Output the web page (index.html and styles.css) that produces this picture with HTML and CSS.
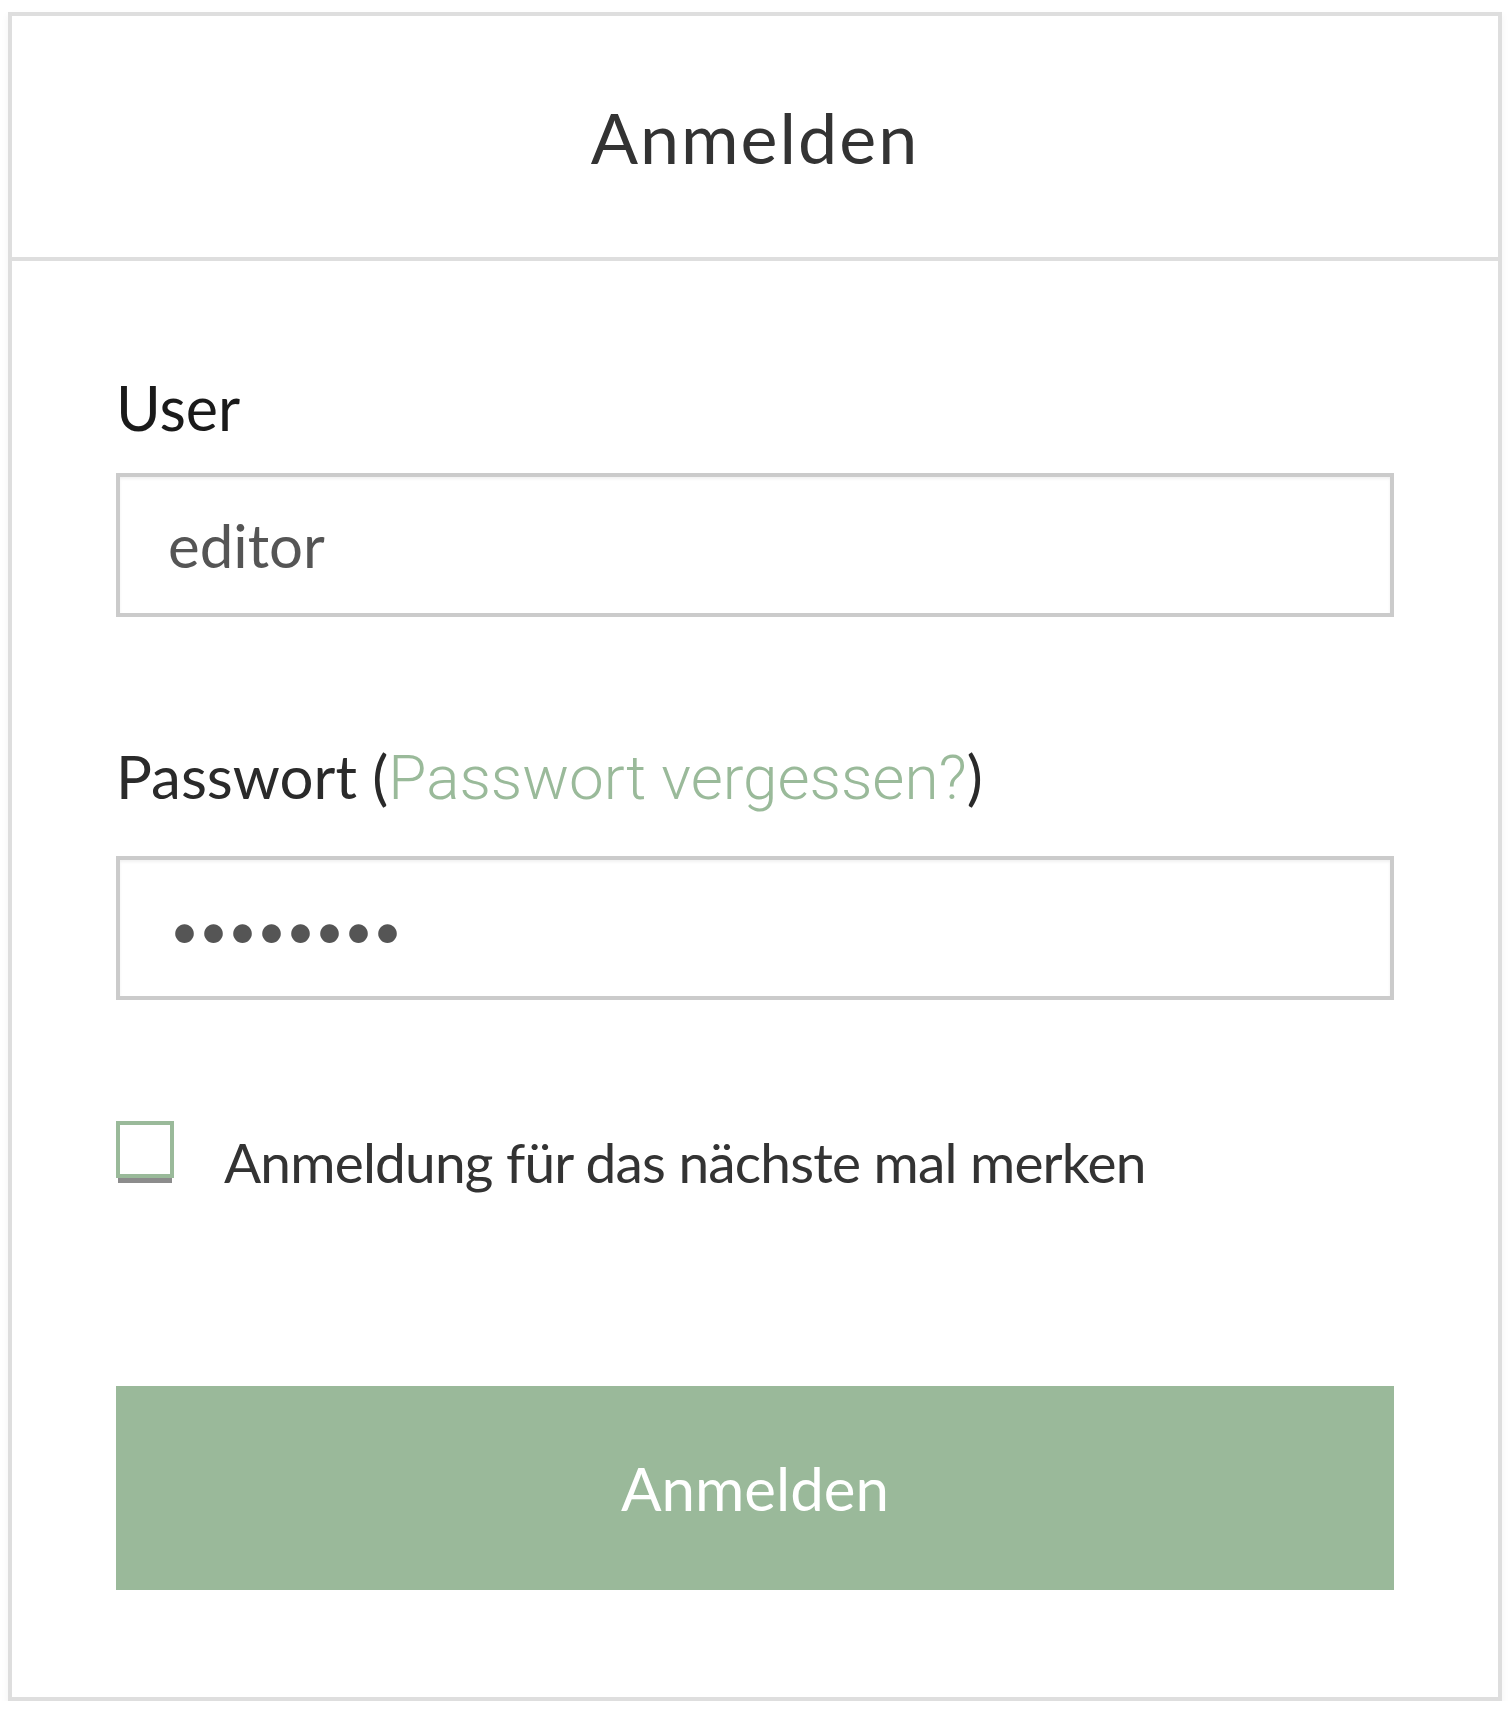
FILE: index.html
```html
<!DOCTYPE html>
<html lang="de">

<head>
    <meta charset="UTF-8">
    <meta name="viewport" content="width=device-width, initial-scale=1.0">
    <title>Anmelden</title>
    <link rel="stylesheet" href="styles.css">
</head>

<body>

    <div class="login">
        <header>Anmelden</header>
        <form class="login-form">
            <label class="field-label" for="user">User</label>
            <input class="field" id="user" type="text" value="editor">

            <label class="field-label pass-label" for="pass">Passwort (<a href="#">Passwort vergessen?</a>)</label>
            <input class="field pass-field" id="pass" type="password" value="12345678">

            <div class="remember">
                <input class="remember-box" id="remember" type="checkbox">
                <label for="remember">Anmeldung für das nächste mal merken</label>
            </div>

            <button class="submit" type="button">Anmelden</button>
        </form>
    </div>

</body>

</html>
```

FILE: styles.css
```css
body {
    font-family: Lato, "Open Sans", sans-serif;
    margin: 0;
    padding: 12px 0 0 8px;
    background-color: #fff;
}

.login {
    width: 1494px;
    box-sizing: border-box;
    border: 4px solid #dedede;
    background-color: #fff;
    box-shadow: 0 4px 8px rgba(0, 0, 0, 0.05);
}

header {
    height: 241px;
    display: flex;
    align-items: center;
    justify-content: center;
    border-bottom: 4px solid #dedede;
    font-size: 70px;
    line-height: 84px;
    letter-spacing: 2px;
    color: #333;
}

.login-form {
    display: flex;
    flex-direction: column;
    padding: 107px 104px 107px 104px;
}

.field-label {
    font-size: 61px;
    line-height: 80px;
    color: #1a1a1a;
}

.field-label a {
    font-family: Roboto, sans-serif;
    font-size: 62px;
    font-weight: 300;
    color: #9aba9a;
    text-decoration: none;
}

.pass-label {
    margin-top: 119px;
    font-size: 60px;
    color: #2a2a2a;
}

.field {
    height: 144px;
    box-sizing: border-box;
    margin-top: 25px;
    padding: 0 0 0 48px;
    border: 4px solid #cbcbcb;
    box-shadow: inset 0 2px 3px rgba(0, 0, 0, 0.06);
    font-family: Lato, sans-serif;
    font-size: 60px;
    color: #555;
    outline: none;
}

.pass-field {
    margin-top: 38px;
    padding-left: 50px;
    padding-top: 4px;
    letter-spacing: 0;
    font-size: 50px;
}

.remember {
    display: flex;
    align-items: flex-start;
    margin-top: 121px;
}

.remember-box {
    appearance: none;
    width: 58px;
    height: 57px;
    margin: 0;
    box-sizing: border-box;
    border: 4px solid #9aba9a;
    background-color: #fff;
    box-shadow: 0 7px 0 -2px #8c8c8c;
}

.remember label {
    margin-left: 50px;
    font-size: 55px;
    line-height: 82px;
    letter-spacing: -0.8px;
    color: #333;
}

.submit {
    height: 204px;
    margin-top: 183px;
    border: none;
    background-color: #9ab99a;
    font-family: Lato, sans-serif;
    font-size: 60px;
    line-height: 74px;
    color: #fff;
}
```
